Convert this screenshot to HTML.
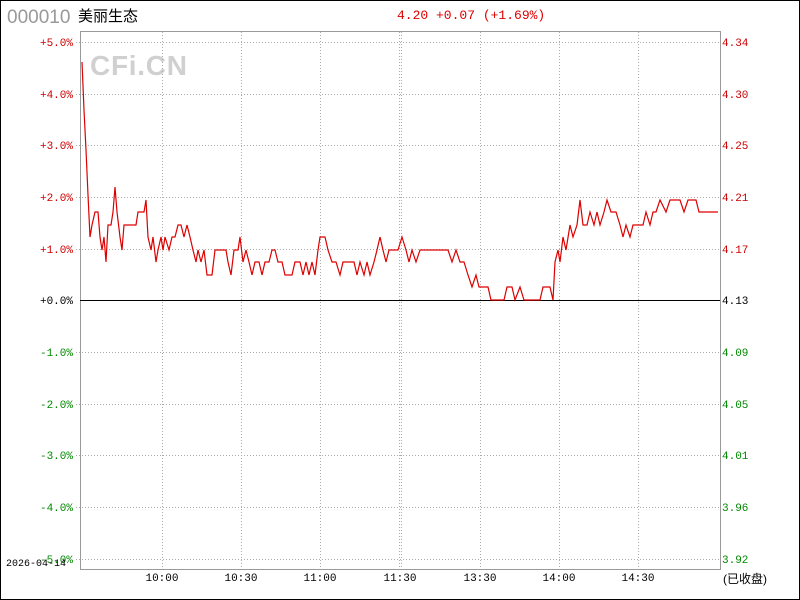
<!DOCTYPE html>
<html><head><meta charset="utf-8"><style>
body{margin:0;width:800px;height:600px;background:#fff;overflow:hidden}
svg{display:block}
text{font-family:"Liberation Mono","Noto Sans CJK SC",monospace;font-size:11px}
</style></head><body>
<svg width="800" height="600" xmlns="http://www.w3.org/2000/svg">
<rect x="0.5" y="0.5" width="799" height="599" fill="#fff" stroke="#000"/>
<text x="7" y="23" style="font-family:'Liberation Sans',sans-serif;font-size:19px" fill="#999">000010</text>
<text x="78" y="21" style="font-family:'Liberation Sans','Noto Sans CJK SC',sans-serif;font-size:15px" fill="#000">美丽生态</text>
<text x="397" y="19" style="font-size:13px" fill="#d00">4.20 +0.07 (+1.69%)</text>
<text x="90" y="75" textLength="97" style="font-family:'Liberation Sans',sans-serif;font-size:28px;font-weight:bold" fill="#d0d0d0">CFi.CN</text>
<g stroke="#aaa" stroke-dasharray="1,2" stroke-width="1">
<line x1="76" y1="42.5" x2="720" y2="42.5"/><line x1="76" y1="94.5" x2="720" y2="94.5"/>
<line x1="76" y1="145.5" x2="720" y2="145.5"/><line x1="76" y1="197.5" x2="720" y2="197.5"/>
<line x1="76" y1="249.5" x2="720" y2="249.5"/>
<line x1="76" y1="352.5" x2="720" y2="352.5"/><line x1="76" y1="404.5" x2="720" y2="404.5"/>
<line x1="76" y1="455.5" x2="720" y2="455.5"/><line x1="76" y1="507.5" x2="720" y2="507.5"/>
<line x1="76" y1="559.5" x2="720" y2="559.5"/>
<line x1="162.5" y1="32" x2="162.5" y2="569"/><line x1="241.5" y1="32" x2="241.5" y2="569"/>
<line x1="320.5" y1="32" x2="320.5" y2="569"/><line x1="399.5" y1="32" x2="399.5" y2="569"/>
<line x1="401.5" y1="32" x2="401.5" y2="569"/><line x1="480.5" y1="32" x2="480.5" y2="569"/>
<line x1="559.5" y1="32" x2="559.5" y2="569"/><line x1="638.5" y1="32" x2="638.5" y2="569"/>
</g>
<rect x="80.5" y="31.5" width="640" height="538" fill="none" stroke="#999"/>
<line x1="80" y1="300.5" x2="720" y2="300.5" stroke="#000"/>
<polyline fill="none" stroke="#d00" stroke-width="1.2" points="82,62 84,110 86,150 88,195 90,237 92,225 95,212 98,212 100,237 102,250 104,237 106,262 108,225 111,225 113,212 115,187 117,212 120,237 122,250 124,225 136,225 138,212 144,212 146,200 148,237 151,250 153,237 156,262 158,250 161,237 163,250 165,237 169,250 172,237 175,237 178,225 181,225 184,237 187,225 190,237 193,250 196,262 198,250 201,262 204,250 207,275 212,275 215,250 226,250 228,262 231,275 234,250 238,250 240,237 243,262 246,250 249,262 252,275 255,262 259,262 262,275 265,262 269,262 272,250 275,250 278,262 282,262 285,275 292,275 295,262 300,262 303,275 306,262 309,275 312,262 315,275 318,250 320,237 325,237 328,250 332,262 336,262 340,275 343,262 354,262 357,275 360,262 364,275 367,262 370,275 374,262 377,250 380,237 383,250 386,262 389,250 398,250 402,237 406,250 409,262 412,250 416,262 420,250 448,250 452,262 456,250 460,262 464,262 468,275 472,287 476,275 479,287 488,287 491,300 504,300 507,287 512,287 515,300 520,287 524,300 540,300 543,287 550,287 553,300 555,262 558,250 560,262 563,237 566,250 570,225 573,237 577,225 580,200 583,225 587,225 590,212 594,225 597,212 600,225 604,212 607,200 611,212 616,212 620,225 623,237 626,225 630,237 633,225 643,225 646,212 650,225 653,212 656,212 660,200 666,212 670,200 680,200 684,212 688,200 696,200 699,212 703,212 718,212"/>
<g fill="#c00" text-anchor="end">
<text x="73" y="46">+5.0%</text><text x="73" y="98">+4.0%</text><text x="73" y="149">+3.0%</text>
<text x="73" y="201">+2.0%</text><text x="73" y="253">+1.0%</text>
</g>
<text x="73" y="304" text-anchor="end" fill="#000">+0.0%</text>
<g fill="#080" text-anchor="end">
<text x="73" y="356">-1.0%</text><text x="73" y="408">-2.0%</text><text x="73" y="459">-3.0%</text>
<text x="73" y="511">-4.0%</text><text x="73" y="563">-5.0%</text>
</g>
<text x="6" y="566" fill="#000" style="font-size:10px">2026-04-14</text>
<g fill="#c00"><text x="722" y="46">4.34</text><text x="722" y="98">4.30</text><text x="722" y="149">4.25</text><text x="722" y="201">4.21</text><text x="722" y="253">4.17</text></g>
<text x="722" y="304" fill="#000">4.13</text>
<g fill="#080"><text x="722" y="356">4.09</text><text x="722" y="408">4.05</text><text x="722" y="459">4.01</text><text x="722" y="511">3.96</text><text x="722" y="563">3.92</text></g>
<g fill="#000" text-anchor="middle">
<text x="162" y="581">10:00</text><text x="241" y="581">10:30</text><text x="320" y="581">11:00</text>
<text x="400" y="581">11:30</text><text x="480" y="581">13:30</text><text x="559" y="581">14:00</text><text x="638" y="581">14:30</text>
<text x="745" y="583" style="font-family:'Liberation Sans','Noto Sans CJK SC',sans-serif;font-size:12px">(已收盘)</text>
</g>
</svg>
</body></html>
